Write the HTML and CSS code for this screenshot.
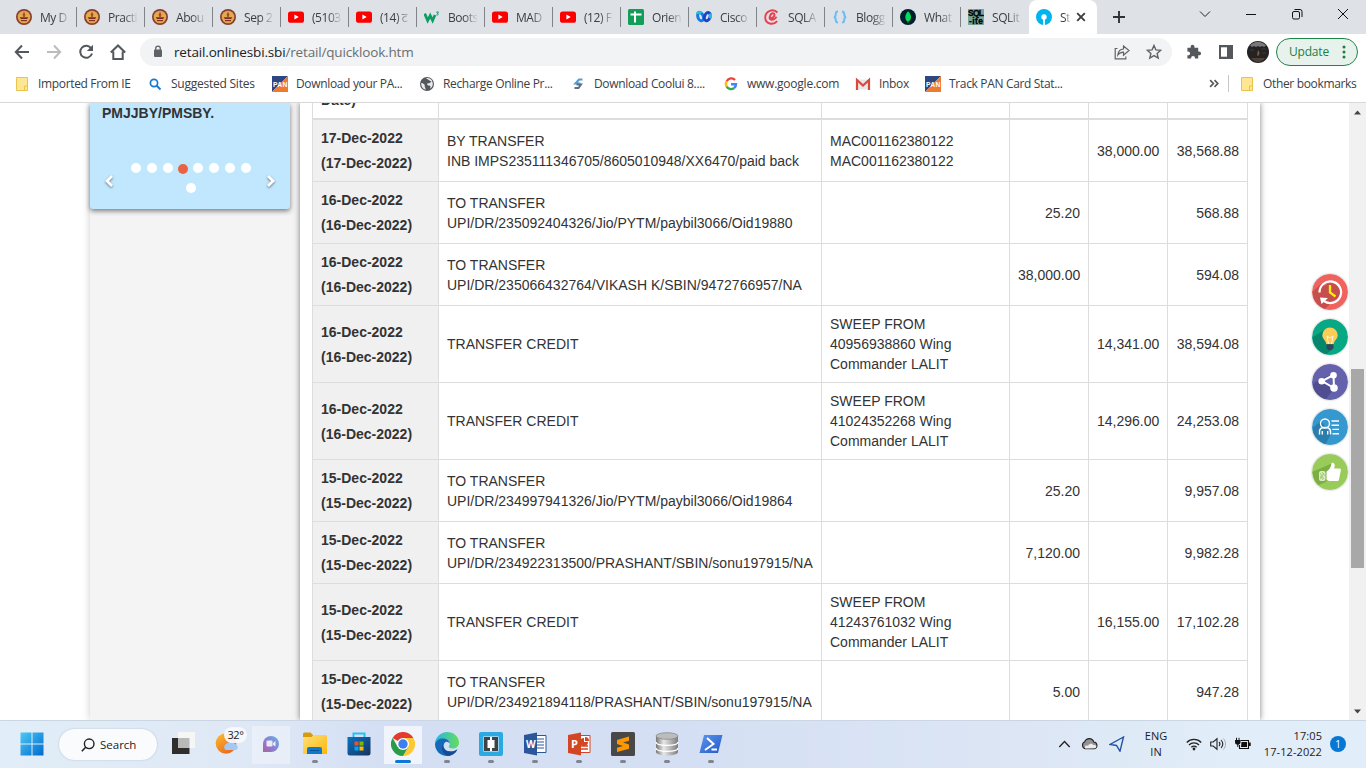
FILE: index.html
```html
<!DOCTYPE html>
<html lang="en">
<head>
<meta charset="utf-8">
<title>Statement</title>
<link rel="stylesheet" href="styles.css">
</head>
<body>
<svg width="0" height="0" class="defs" aria-hidden="true">
  <defs>
    <linearGradient id="gWin" x1="0" y1="0" x2="1" y2="1"><stop offset="0" stop-color="#4cc9f6"/><stop offset="1" stop-color="#0069cf"/></linearGradient>
    <linearGradient id="gSun" x1="0" y1="0" x2="0.6" y2="1"><stop offset="0" stop-color="#fbc02f"/><stop offset="1" stop-color="#ec6a1e"/></linearGradient>
    <linearGradient id="gChat" x1="1" y1="0" x2="0" y2="1"><stop offset="0" stop-color="#63b4ea"/><stop offset=".55" stop-color="#8a80cb"/><stop offset="1" stop-color="#b35ea8"/></linearGradient>
    <linearGradient id="gFold" x1="0" y1="0" x2="1" y2="1"><stop offset="0" stop-color="#ffe07a"/><stop offset="1" stop-color="#fbb80b"/></linearGradient>
    <linearGradient id="gStore" x1="0" y1="0" x2="1" y2="1"><stop offset="0" stop-color="#0a73c4"/><stop offset="1" stop-color="#17325c"/></linearGradient>
    <linearGradient id="gEdge" x1="0" y1="0" x2="1" y2="0"><stop offset="0" stop-color="#2bb4e8"/><stop offset="1" stop-color="#65dd5c"/></linearGradient>
    <linearGradient id="gDb" x1="0" y1="0" x2="1" y2="0"><stop offset="0" stop-color="#777"/><stop offset=".35" stop-color="#e8e8e8"/><stop offset="1" stop-color="#7d7d7d"/></linearGradient>
    <linearGradient id="gPs" x1="0" y1="0" x2="1" y2="1"><stop offset="0" stop-color="#5b97f2"/><stop offset="1" stop-color="#2458c4"/></linearGradient>
    <clipPath id="disc"><circle cx="18" cy="18" r="17.5"/></clipPath>
    <symbol id="emblem" viewBox="0 0 16 16"><circle cx="8" cy="8" r="8" fill="#8b3d31"/><circle cx="8" cy="8" r="6.300" fill="#e0ab4c"/><path d="M8 2.500l1.300 3L8.700 8H7.300L6.700 5.500z" fill="#a8482c"/><path d="M3.800 8.200h8.400c-.4 1.300-1.200 1.900-1.800 1.900H5.600c-.6 0-1.400-.6-1.800-1.900z" fill="#7d2c25"/><path d="M5 11.600h6" stroke="#7d2c25" stroke-width="1.100"/></symbol>
    <symbol id="yt" viewBox="0 0 16 16"><rect y="2.400" width="16" height="11.400" rx="2.600" fill="#f00"/><path d="M6.400 5.600v5l4.300-2.500z" fill="#fff"/></symbol>
    <symbol id="pan" viewBox="0 0 16 16"><path d="M0 0h16L0 16z" fill="#2d4780"/><path d="M16 0v16H0z" fill="#ee7a32"/><text x="1" y="11" font-family="Liberation Sans,sans-serif" font-weight="700" font-size="6.800" textLength="14" fill="#fff">PAN</text></symbol>
    <symbol id="folder" viewBox="0 0 16 16"><path d="M2.500 1.500h11v13h-11z" fill="#ffe692" stroke="#e9c34c"/><path d="M10.500 14v-4h3" fill="none" stroke="#e9c34c"/></symbol>
  </defs>
</svg>
<div class="screen">
  <div class="tabstrip">
    <div class="tab"><svg class="fav"><use href="#emblem"/></svg><span class="tt">My D</span></div>
    <div class="tab"><svg class="fav"><use href="#emblem"/></svg><span class="tt">Practi</span></div>
    <div class="tab"><svg class="fav"><use href="#emblem"/></svg><span class="tt">Abou</span></div>
    <div class="tab"><svg class="fav"><use href="#emblem"/></svg><span class="tt">Sep 2</span></div>
    <div class="tab"><svg class="fav"><use href="#yt"/></svg><span class="tt">(5103</span></div>
    <div class="tab"><svg class="fav"><use href="#yt"/></svg><span class="tt">(14) ट</span></div>
    <div class="tab"><svg class="fav" viewBox="0 0 16 16"><path d="M.7 4.600l3 7 2.500-5 2.400 5L11 6" fill="none" stroke="#0c9d63" stroke-width="2.700"/><path d="M12.300 3h2.200l-1.200 1.400c1.500-.1 1.500 2-.9 1.600" fill="none" stroke="#0c9d63"/></svg><span class="tt">Boots</span></div>
    <div class="tab"><svg class="fav"><use href="#yt"/></svg><span class="tt">MAD</span></div>
    <div class="tab"><svg class="fav"><use href="#yt"/></svg><span class="tt">(12) F</span></div>
    <div class="tab"><svg class="fav" viewBox="0 0 16 16"><rect width="16" height="16" rx="1.500" fill="#129d59"/><path d="M2.500 5.500h11M7 2.500v11" stroke="#fff" stroke-width="2"/></svg><span class="tt">Orien</span></div>
    <div class="tab"><svg class="fav" viewBox="0 0 16 16"><g fill="none" stroke-width="3"><ellipse cx="4.700" cy="7.600" rx="2.700" ry="4.200" stroke="#1878e8" transform="rotate(-20 5 8)"/><ellipse cx="11.200" cy="7.600" rx="2.700" ry="4.200" stroke="#1747c8" transform="rotate(20 11 8)"/><path d="M1.600 5c0-2 2.600-2.400 3.800-.8" stroke="#18c8c8"/><path d="M14 4.600c1 1.600.4 3.600-.2 4.600" stroke="#27b8ed"/></g></svg><span class="tt">Cisco</span></div>
    <div class="tab"><svg class="fav" viewBox="0 0 16 16"><path d="M5 9.400c5 .5 7-4.600 4.200-5.200C6.500 3.800 4.500 9.500 6.500 10.500c2.300 1 5-1.200 6-2.800M13.400 3.500C9.300-1 1.200 1.800 1.200 8.600c0 6.600 8.200 8 12 3.600" fill="none" stroke="#e8404d" stroke-width="1.900"/></svg><span class="tt">SQLA</span></div>
    <div class="tab"><svg class="fav" viewBox="0 0 16 16"><path d="M6 2.500c-2 0-2.200.8-2.200 2.500 0 2-.2 2.600-1.800 3 1.600.4 1.800 1 1.800 3 0 1.700.2 2.500 2.200 2.500M10 2.500c2 0 2.200.8 2.200 2.500 0 2 .2 2.600 1.800 3-1.600.4-1.800 1-1.800 3 0 1.700-.2 2.500-2.200 2.500" fill="none" stroke="#6dbdf5" stroke-width="2"/></svg><span class="tt">Blogg</span></div>
    <div class="tab"><svg class="fav" viewBox="0 0 16 16"><circle cx="8" cy="8" r="8" fill="#021e2b"/><path d="M8 2.300c5 4.700 3 9 .2 10.500V14h-.5v-1.200C4.500 10.500 4.500 6 8 2.300z" fill="#00dc5c"/></svg><span class="tt">What</span></div>
    <div class="tab nosep"><svg class="fav" viewBox="0 0 16 16"><rect width="16" height="16" fill="#78a698"/><g font-family="Liberation Sans,sans-serif" font-weight="700" font-size="8.500" stroke="#000" stroke-width=".3"><text x="0" y="7" textLength="16">SQL</text><text x="1" y="15" textLength="14">-ite</text></g></svg><span class="tt">SQLit</span></div>
    <div class="tab active"><svg class="fav" viewBox="0 0 16 16"><circle cx="8" cy="8" r="8" fill="#00b5ef"/><circle cx="8" cy="8" r="2.700" fill="#fff"/><path d="M7.100 8h1.800v8H7.100z" fill="#fff"/></svg><span class="tt short">St</span><svg class="close" viewBox="0 0 10 10"><path d="M1.200 1.200l7.600 7.600M8.800 1.200L1.200 8.800" stroke="#3c4043" stroke-width="1.900"/></svg></div>
    <svg class="plus" viewBox="0 0 12 12"><path d="M6 0v12M0 6h12" stroke="#303336" stroke-width="1.900"/></svg>
    <div class="winctl">
      <svg viewBox="0 0 12 12"><path d="M1 3.500l5 5 5-5" fill="none" stroke="#222"/></svg>
      <svg viewBox="0 0 12 12"><path d="M1 6.500h10" stroke="#111"/></svg>
      <svg viewBox="0 0 12 12"><rect x="1.500" y="3.500" width="7" height="7.500" rx="1.500" fill="none" stroke="#111"/><path d="M3.500 1.500H9a2 2 0 012 2V9" fill="none" stroke="#111"/></svg>
      <svg viewBox="0 0 12 12"><path d="M1 1l10 10M11 1L1 11" stroke="#111"/></svg>
    </div>
  </div>

  <div class="toolbar">
    <div class="nav">
      <svg viewBox="0 0 16 16"><path d="M15 8H2M8 1.500L1.800 8 8 14.500" fill="none" stroke="#54585c" stroke-width="2"/></svg>
      <svg viewBox="0 0 16 16"><path d="M1 8h13M8 1.500L14.200 8 8 14.500" fill="none" stroke="#babcbe" stroke-width="2"/></svg>
      <svg viewBox="0 0 16 16"><path d="M13.300 4.500A6 6 0 1014 9.500" fill="none" stroke="#54585c" stroke-width="2"/><path d="M15 .8v6.200H8.800z" fill="#54585c"/></svg>
      <svg viewBox="0 0 16 16"><path d="M.8 8.500L8 1.500l7.200 7M3.300 7.500v7.400h9.400V7.500" fill="none" stroke="#54585c" stroke-width="2"/></svg>
    </div>
    <div class="omnibox">
      <svg class="lock" viewBox="0 0 10 13"><rect x="1" y="4.500" width="8" height="7.500" rx="1" fill="#5f6368"/><path d="M2.700 5V3.400a2.300 2.300 0 014.600 0V5" fill="none" stroke="#5f6368" stroke-width="1.300"/></svg>
      <span class="url"><b>retail.onlinesbi.sbi</b>/retail/quicklook.htm</span>
      <svg class="share" viewBox="0 0 16 16"><path d="M3.500 4.500H1.200v10.300h10.600v-2.300M9.500 2v3C6 5.300 4.200 7.500 3.800 11c1.500-2 3-2.800 5.700-2.800v3L15 6.500z" fill="none" stroke="#5f6368" stroke-width="1.200"/></svg>
      <svg class="star" viewBox="0 0 16 16"><path d="M8 1.500l1.900 4.400 4.800.4-3.600 3.100 1.100 4.700L8 11.600l-4.200 2.500 1.100-4.700L1.300 6.300l4.800-.4z" fill="none" stroke="#5f6368" stroke-width="1.400"/></svg>
    </div>
    <div class="actions">
      <svg viewBox="0 0 16 16"><path d="M1.500 4H5C4.600 1.500 6 .8 7 .8s2.400.8 2 3.200h4v4c2.300-.4 3 1 3 2s-.7 2.300-3 2v3.500H9.500c.3-2-.8-2.800-2-2.800s-2.300.8-2 2.800h-4V12c2 .3 2.800-.8 2.800-2S3.500 7.700 1.500 8z" fill="#54585c" transform="scale(.94)"/></svg>
      <svg viewBox="0 0 16 16"><path d="M1 1h14v14H1z" fill="#54585c"/><path d="M3 3.300h6v9.400H3z" fill="#fff"/></svg>
      <svg class="avatar" viewBox="0 0 22 22"><circle cx="11" cy="11" r="11" fill="#252223"/><path d="M3 4.500C8-.5 14-.5 19 4.500l-2 1.500-2-1-2 1-2-1-2 1-2-1-2 1z" fill="#77797d"/><path d="M4 17h14c-4 5.500-10 5.500-14 0z" fill="#4d4038"/><path d="M11 9l1.500 2.500-.5 3h-2z" fill="#7a5b45"/><path d="M3 9h4M14 8h5M15 12h4" stroke="#3f3a39"/></svg>
      <div class="update"><span>Update</span><svg viewBox="0 0 4 14"><circle cx="2" cy="2" r="1.500"/><circle cx="2" cy="7" r="1.500"/><circle cx="2" cy="12" r="1.500"/></svg></div>
    </div>
  </div>

  <div class="bookmarks">
    <div class="bm"><svg><use href="#folder"/></svg><span>Imported From IE</span></div>
    <div class="bm wide"><svg viewBox="0 0 16 16"><circle cx="7" cy="7" r="3.600" fill="none" stroke="#1b78d0" stroke-width="1.700"/><path d="M9.500 9.500l4 4" stroke="#1b78d0" stroke-width="2"/></svg><span>Suggested Sites</span></div>
    <div class="bm"><svg><use href="#pan"/></svg><span>Download your PA...</span></div>
    <div class="bm"><svg viewBox="0 0 16 16"><circle cx="8" cy="8" r="7" fill="#54585c"/><path d="M2.200 7c2 .3 4 1.200 3.500 3-.2 1 1 1.500.8 3.700C3.500 13 2 10 2.200 7zM7 2.300c3-.8 5.500 1 6.500 3.200-2 0-2 2-4 1.700-2-.2-1.500 2.300.5 2.300 1.500 0 2 1 1 3.300 2.500-1.300 3.200-4 2.700-6.300" fill="#e9eaeb"/></svg><span>Recharge Online Pr...</span></div>
    <div class="bm"><svg viewBox="0 0 16 16"><path d="M12.500 3.500H9L5.500 7.500h5" fill="none" stroke="#4f9fda" stroke-width="2.200"/><path d="M6.500 8.500h4.500L8.500 12H4.500" fill="none" stroke="#5c7183" stroke-width="2"/></svg><span>Download Coolui 8....</span></div>
    <div class="bm wide"><svg viewBox="0 0 16 16"><g fill="none" stroke-width="2.400"><path d="M12 4A5 5 0 003.700 5.400" stroke="#ea4335"/><path d="M3.700 5.400a5 5 0 000 5.200" stroke="#fbbc05"/><path d="M3.700 10.600A5 5 0 0011.200 12" stroke="#34a853"/><path d="M11.200 12A5 5 0 0013 8.200H8" stroke="#4285f4"/></g></svg><span>www.google.com</span></div>
    <div class="bm"><svg viewBox="0 0 16 16"><path d="M1.500 3.500h13v10h-13z" fill="#e9e9e9"/><path d="M2 14V4l6 5.500L14 4v10" fill="none" stroke="#d54b3d" stroke-width="2.200"/></svg><span>Inbox</span></div>
    <div class="bm"><svg><use href="#pan"/></svg><span>Track PAN Card Stat...</span></div>
    <div class="bm more"><svg viewBox="0 0 10 10"><path d="M1 2l3 3-3 3M5 2l3 3-3 3" fill="none" stroke="#54585c" stroke-width="1.500"/></svg></div>
    <div class="bm other"><svg><use href="#folder"/></svg><span>Other bookmarks</span></div>
  </div>

  <div class="viewport">
    <div class="page">
      <div class="side">
        <div class="card">
          <p>PMJJBY/PMSBY.</p>
          <div class="slider">
            <svg viewBox="0 0 10 14"><path d="M8 2L3 7l5 5" fill="none" stroke="#fff" stroke-width="2.800"/></svg>
            <div class="dots"><i></i><i></i><i></i><i class="on"></i><i></i><i></i><i></i><i></i><i></i></div>
            <svg viewBox="0 0 10 14"><path d="M2 2l5 5-5 5" fill="none" stroke="#fff" stroke-width="2.800"/></svg>
          </div>
        </div>
      </div>
      <div class="main">
        <div class="row head"><div>Date)</div><div></div><div></div><div></div><div></div><div></div></div>
        <div class="row"><div>17-Dec-2022<br>(17-Dec-2022)</div><div>BY TRANSFER<br>INB IMPS235111346705/8605010948/XX6470/paid back</div><div>MAC001162380122<br>MAC001162380122</div><div></div><div>38,000.00</div><div>38,568.88</div></div>
        <div class="row"><div>16-Dec-2022<br>(16-Dec-2022)</div><div>TO TRANSFER<br>UPI/DR/235092404326/Jio/PYTM/paybil3066/Oid19880</div><div></div><div>25.20</div><div></div><div>568.88</div></div>
        <div class="row"><div>16-Dec-2022<br>(16-Dec-2022)</div><div>TO TRANSFER<br>UPI/DR/235066432764/VIKASH K/SBIN/9472766957/NA</div><div></div><div>38,000.00</div><div></div><div>594.08</div></div>
        <div class="row tall"><div>16-Dec-2022<br>(16-Dec-2022)</div><div>TRANSFER CREDIT</div><div>SWEEP FROM<br>40956938860 Wing<br>Commander LALIT</div><div></div><div>14,341.00</div><div>38,594.08</div></div>
        <div class="row tall"><div>16-Dec-2022<br>(16-Dec-2022)</div><div>TRANSFER CREDIT</div><div>SWEEP FROM<br>41024352268 Wing<br>Commander LALIT</div><div></div><div>14,296.00</div><div>24,253.08</div></div>
        <div class="row"><div>15-Dec-2022<br>(15-Dec-2022)</div><div>TO TRANSFER<br>UPI/DR/234997941326/Jio/PYTM/paybil3066/Oid19864</div><div></div><div>25.20</div><div></div><div>9,957.08</div></div>
        <div class="row"><div>15-Dec-2022<br>(15-Dec-2022)</div><div>TO TRANSFER<br>UPI/DR/234922313500/PRASHANT/SBIN/sonu197915/NA</div><div></div><div>7,120.00</div><div></div><div>9,982.28</div></div>
        <div class="row tall"><div>15-Dec-2022<br>(15-Dec-2022)</div><div>TRANSFER CREDIT</div><div>SWEEP FROM<br>41243761032 Wing<br>Commander LALIT</div><div></div><div>16,155.00</div><div>17,102.28</div></div>
        <div class="row"><div>15-Dec-2022<br>(15-Dec-2022)</div><div>TO TRANSFER<br>UPI/DR/234921894118/PRASHANT/SBIN/sonu197915/NA</div><div></div><div>5.00</div><div></div><div>947.28</div></div>
      </div>
    </div>
    <div class="floaters">
      <svg viewBox="0 0 36 36"><circle cx="18" cy="18" r="18" fill="#ef625e"/><path d="M9 10L0 18v18h12l16-16z" fill="#c64f4e" clip-path="url(#disc)"/><circle cx="19" cy="18" r="9" fill="#c64f4e"/><path d="M7.500 18.500A10.800 10.800 0 1112 27" fill="none" stroke="#fff" stroke-width="2.200"/><path d="M8 23.500l8 .5-6.500 6z" fill="#fff"/><path d="M18 11v7.500l5.500 4" fill="none" stroke="#fff200" stroke-width="2.300"/></svg>
      <svg viewBox="0 0 36 36"><circle cx="18" cy="18" r="18" fill="#07a883"/><path d="M13 10.500L-2 20l14 18 8-8z" fill="#06866c" clip-path="url(#disc)"/><path d="M18 8.500a7.700 7.700 0 00-7.700 7.700c0 4 3.700 5 4 9h7.400c.3-4 4-5 4-9A7.700 7.700 0 0018 8.500z" fill="#ffcd55"/><path d="M16.500 25l-1.500-8 3 2 3-2-1.500 8" fill="none" stroke="#fff" stroke-width=".8"/><path d="M14.500 25.300h7v4l-2.300 2h-2.400l-2.300-2z" fill="#31465b"/></svg>
      <svg viewBox="0 0 36 36"><circle cx="18" cy="18" r="18" fill="#6462ad"/><path d="M8 15L-2 22l14 16 11-15-4-12z" fill="#504e91" clip-path="url(#disc)"/><path d="M10 17l11.500-6 .5 13z" fill="#6462ad" stroke="#fff" stroke-width="2"/><circle cx="9.700" cy="17.300" r="3.300" fill="#fff"/><circle cx="21.500" cy="11.300" r="3.300" fill="#fff"/><circle cx="22" cy="24" r="3.800" fill="#fff"/></svg>
      <svg viewBox="0 0 36 36"><circle cx="18" cy="18" r="18" fill="#3598cf"/><path d="M9 12L-2 21l14 17 7-13z" fill="#2b7eac" clip-path="url(#disc)"/><g fill="none" stroke="#fff" stroke-width="1.400"><circle cx="13" cy="14.500" r="4.500"/><path d="M7.500 25.500v-3c0-2 1.500-3.500 3.500-4h4c2 .5 3.500 2 3.500 4v3M10.300 22v3.500M15.700 22v3.500M19.500 12H27M19.500 16.200H27M20.500 20.400H27M20.500 24.800H27"/></g></svg>
      <svg viewBox="0 0 36 36"><circle cx="18" cy="18" r="18" fill="#98cb59"/><path d="M21 9L0 18l4 14 10-4z" fill="#7baf45" clip-path="url(#disc)"/><rect x="7" y="17" width="6.500" height="10" rx="2" fill="#dfeacb"/><path d="M8 19l4 6M8 22l3 4M10 18l3 4M12 19l-4 6" stroke="#89bd51" stroke-width=".7"/><path d="M14.500 17.500c3-2 4.600-4.500 5-8.500 2.500-.7 4.200 1.500 2.600 5.500h5.500c1.300 0 1.600 1 1.200 2l-1.800 9c-.3 1-1 1.500-2 1.500H17l-2.500-1.500z" fill="#fff"/></svg>
    </div>
    <div class="scroll"><svg viewBox="0 0 9 5"><path d="M0 5l4.500-5L9 5z"/></svg><div class="thumb"></div><svg viewBox="0 0 9 5"><path d="M0 0l4.500 5L9 0z"/></svg></div>
  </div>

  <div class="taskbar">
    <div class="app"><svg viewBox="0 0 24 24"><path d="M.5 .5h11v11H.5zM12.500.5h11v11h-11zM.5 12.500h11v11H.5zM12.500 12.500h11v11h-11z" fill="url(#gWin)"/></svg></div>
    <div class="search"><svg viewBox="0 0 14 14"><circle cx="8.200" cy="5.800" r="4.800" fill="none" stroke="#222" stroke-width="1.400"/><path d="M4.700 9.300L.8 13.200" stroke="#222" stroke-width="1.600"/></svg><span>Search</span></div>
    <div class="app"><svg viewBox="0 0 24 24"><rect x="1" y="6" width="17.500" height="16" fill="#2f2e2d"/><rect x="7" y="0" width="17.500" height="16" rx="1" fill="#f5f6f6"/><path d="M7 6h11.500v10H7z" fill="#b9b9b9"/></svg></div>
    <div class="app weather"><svg viewBox="0 0 24 24"><circle cx="11" cy="11.500" r="10.300" fill="url(#gSun)"/><path d="M11 18a3.500 3.500 0 011-6.500 5 5 0 018 .5 3.200 3.200 0 011 6z" fill="#a4c8f4"/></svg><span>32°</span></div>
    <div class="app lit soft"><svg viewBox="0 0 24 24"><path d="M4 20V12a8 8 0 118 8z" fill="url(#gChat)"/><rect x="7.500" y="8.500" width="6" height="6" rx="1" fill="#eee8fb"/><path d="M14 11l2.500-2v5.500L14 13z" fill="#eee8fb"/></svg></div>
    <div class="app run"><svg viewBox="0 0 24 24"><path d="M0 2a1.500 1.500 0 011.500-1.500h6L10 3v4H0z" fill="#d99a0e"/><path d="M0 5h8.500l2-2H22.500A1.500 1.500 0 0124 4.500V22H0z" fill="url(#gFold)"/><path d="M4 22v-5a2 2 0 012-2h11a2 2 0 012 2v5z" fill="#0f79cf"/><path d="M7 18.500h9" stroke="#0a5598"/></svg></div>
    <div class="app"><svg viewBox="0 0 24 24"><path d="M6.500 6V1.500h11V6" fill="none" stroke="#28c0f2" stroke-width="2"/><path d="M.5 5h23v16a2.500 2.500 0 01-2.500 2.500H3A2.500 2.500 0 01.5 21z" fill="url(#gStore)"/><path d="M7.500 9.500h4v4h-4z" fill="#f25022"/><path d="M12.500 9.500h4v4h-4z" fill="#7fba00"/><path d="M7.500 14.500h4v4h-4z" fill="#00a4ef"/><path d="M12.500 14.500h4v4h-4z" fill="#ffb900"/></svg></div>
    <div class="app lit run front"><svg viewBox="0 0 24 24"><path d="M12 12L1.600 6A12 12 0 0122.400 6z" fill="#e33b2e"/><path d="M12 12V6h10.400A12 12 0 0112 24l5.200-9z" fill="#fcc934"/><path d="M12 12l5.200 3L12 24A12 12 0 011.600 6L6.800 15z" fill="#2a9c48"/><circle cx="12" cy="12" r="6" fill="#fff"/><circle cx="12" cy="12" r="4.700" fill="#3c7ff0"/></svg></div>
    <div class="app run"><svg viewBox="0 0 24 24"><path d="M0 12C0 5 6 0 12 0c7 0 12 5 12 10.500 0 4-3 6-6.500 6-2.500 0-3.700-.9-3.700-1.700 0-.9 1-1.300 1-3C14.800 9 12 7 8.500 7 4 7 1 9.500 0 12z" fill="url(#gEdge)"/><path d="M0 12c1-3.500 4-5.500 8-5.500 4 0 6.800 2.500 6.800 5.300-1-2-3.800-2.800-5.300-.8-2.500 3.500.5 8.500 6 8.500 2.500 0 5-.8 7-2.300C20.500 21.500 16.500 24 12 24 5.500 24 0 19 0 12z" fill="#1668b8"/><path d="M8.500 12c-1.500 4 1.500 7.500 7 7.500 2.500 0 5-.8 7-2.300-2 4-5.500 6.300-9 6.700C7.500 22.500 5.500 16 8.500 12z" fill="#134c95"/></svg></div>
    <div class="app run"><svg viewBox="0 0 24 24"><rect width="24" height="24" rx="2" fill="#2ba9e0"/><rect x="4.500" y="4.500" width="15" height="15" fill="#fff"/><path d="M5 5h6v3H8.500v8H11v3H5zM19 5h-6v3h2.500v8H13v3h6z" fill="#404346"/></svg></div>
    <div class="app run"><svg viewBox="0 0 24 24"><path d="M12 3.500h11v17H12z" fill="#fff" stroke="#2b579a"/><path d="M14 7h7M14 10h7M14 13h7M14 16h7" stroke="#2b579a"/><path d="M1 3L14 .5v23L1 21z" fill="#2b579a"/><text x="3" y="16" font-family="Open Sans,sans-serif" font-size="10" font-weight="700" textLength="9" fill="#fff">W</text></svg></div>
    <div class="app run"><svg viewBox="0 0 24 24"><path d="M12 3.500h11v17H12z" fill="#fff" stroke="#d24625"/><path d="M14 14h7M14 17h7" stroke="#d24625" stroke-width="1.500"/><path d="M17 6v4h4a4 4 0 11-4-4zM18 5a4 4 0 014 4h-4z" fill="#d24625"/><path d="M1 3L14 .5v23L1 21z" fill="#d24625"/><text x="4" y="16" font-family="Open Sans,sans-serif" font-size="11" font-weight="700" fill="#fff">P</text></svg></div>
    <div class="app run"><svg viewBox="0 0 24 24"><rect width="24" height="24" rx="1.500" fill="#484848"/><path d="M18 4.500v4.200l-6 1.800 6 2v4.200L6 20v-4.200l6-1.800-6-2V8z" fill="#ff9800"/></svg></div>
    <div class="app run"><svg viewBox="0 0 24 24"><path d="M1 4v16c0 2 5 3.500 11 3.500S23 22 23 20V4z" fill="url(#gDb)"/><ellipse cx="12" cy="4" rx="11" ry="3.300" fill="#bcbcbc" stroke="#838383" stroke-width=".7"/><path d="M1 10c0 4.500 22 4.500 22 0M1 16c0 4.500 22 4.500 22 0" fill="none" stroke="#fff" stroke-width="1.300"/></svg></div>
    <div class="app run"><svg viewBox="0 0 24 24"><path d="M5 3h18.500L19 21H.5z" fill="url(#gPs)"/><path d="M8 6l6.500 6L6 18M12.500 17.500h5.500" fill="none" stroke="#fff" stroke-width="2"/></svg></div>
    <div class="tray">
      <svg class="t1" viewBox="0 0 12 12"><path d="M.8 9L6 3.500 11.200 9" fill="none" stroke="#222" stroke-width="1.300"/></svg>
      <svg class="t2" viewBox="0 0 16 12"><path d="M4 11a3.500 3.500 0 01-.5-6.600A4.500 4.500 0 0112 4.500 3.300 3.300 0 0112.500 11z" fill="#929292" stroke="#222"/><path d="M4 10.600c-1-1.500 0-3.500 2.500-2.600 2-2.500 4-2 5-.5 4-.8 3.500 3 1.200 3z" fill="#ececec"/></svg>
      <svg class="t3" viewBox="0 0 16 16"><path d="M14.500 1L1 8.500l6.500 1 3.500 5.700z" fill="none" stroke="#2352a5" stroke-width="1.400"/></svg>
      <div class="lang">ENG<br>IN</div>
      <svg class="t4" viewBox="0 0 16 14"><g fill="none" stroke="#222" stroke-width="1.300"><path d="M.8 5.500a10 10 0 0114.400 0M3 8a7 7 0 0110 0M5.300 10.300a4 4 0 015.400 0"/></g><circle cx="8" cy="12" r="1.400" fill="#222"/></svg>
      <svg class="t5" viewBox="0 0 16 14"><path d="M.7 5h2.500L7 1.800v10.400L3.200 9H.7zM9 5c1.200 1.200 1.200 2.800 0 4M11 3c2.300 2.500 2.300 5.500 0 8" fill="none" stroke="#222" stroke-width="1.100"/><path d="M13.300 1.500c3 3.300 3 7.700 0 11" fill="none" stroke="#aaa"/></svg>
      <svg class="t6" viewBox="0 0 16 14"><path d="M5.500 3.500H13.500v8H4.500V8" fill="none" stroke="#111" stroke-width="1.100"/><path d="M6.500 5h5.500v5H6z" fill="#111"/><path d="M14 5.500h1.700v3.500H14zM0 3h5.500v2a2.700 2.700 0 01-5.500 0z" fill="#111"/><path d="M1.500 .8v2.200M4 .8v2.200M2.800 7v3" stroke="#111"/></svg>
      <div class="clock">17:05<br>17-12-2022</div>
      <div class="count">1</div>
    </div>
  </div>
</div>
</body>
</html>
```
FILE: styles.css
```css
* { box-sizing: border-box; }
body { margin: 0; overflow: hidden; font-family: "Open Sans", "Noto Sans", sans-serif; font-size: 12px; color: #3c4043; }
svg { display: block; flex: none; }
.defs { position: absolute; }
.screen { width: 1366px; height: 768px; display: flex; flex-direction: column; overflow: hidden; background: #fff; }

.tabstrip { height: 34px; flex: none; background: #dee1e6; display: flex; align-items: center; padding-left: 9px; }
.tab { width: 68px; height: 34px; flex: none; display: flex; align-items: center; padding-left: 7px; gap: 8px; background: linear-gradient(#808387, #808387) right 0 top 7px / 1px 20px no-repeat; }
.tab.nosep { background: none; }
.fav { width: 16px; height: 16px; }
.tt { width: 29px; white-space: nowrap; letter-spacing: -.45px; -webkit-mask-image: linear-gradient(90deg, #000 55%, rgba(0,0,0,.1)); mask-image: linear-gradient(90deg, #000 55%, rgba(0,0,0,.1)); }
.tab.active { background: #fff; border-radius: 8px 8px 0 0; }
.tt.short { width: 10px; margin-right: -1px; }
.close { width: 10px; height: 10px; margin-left: -1px; }
.plus { width: 12px; height: 12px; margin-left: 16px; }
.winctl { margin-left: auto; display: flex; gap: 34px; padding: 0 17px 6px 0; }
.winctl svg { width: 12px; height: 12px; }

.toolbar { height: 35px; flex: none; display: flex; align-items: center; }
.nav { display: flex; gap: 16px; padding-left: 14px; width: 140px; }
.nav svg { width: 16px; height: 16px; }
.omnibox { width: 1032px; height: 28px; border-radius: 14px; background: #f1f3f4; display: flex; align-items: center; padding: 0 10px 0 13px; }
.lock { width: 10px; height: 13px; }
.url { margin-left: 11px; font-size: 13.5px; color: #6a6e73; letter-spacing: -.16px; flex: 1; white-space: nowrap; }
.url b { font-weight: 400; color: #202124; }
.share, .star { width: 16px; height: 16px; }
.star { margin-left: 16px; }
.actions { display: flex; align-items: center; padding-left: 14px; }
.actions > svg { width: 16px; height: 16px; margin-right: 16px; }
.actions > svg.avatar { width: 22px; height: 22px; margin: 0 7px 0 -3px; }
.update { width: 82px; height: 28px; border: 1px solid #1e8449; border-radius: 14px; background: #e8f2ec; color: #1a7f3c; display: flex; align-items: center; padding: 0 11px 0 12px; justify-content: space-between; font-size: 12px; letter-spacing: -.2px; }
.update svg { width: 4px; height: 14px; fill: #1a7f3c; }

.bookmarks { height: 34px; flex: none; border-bottom: 1px solid #d6d8da; padding-left: 14px; display: grid; grid-template-columns: 133px 125px 147px 151px 153px 132px 70px 284px 30px 1fr; align-items: center; padding-bottom: 4px; letter-spacing: -.34px; }
.bm { display: flex; align-items: center; gap: 8px; white-space: nowrap; }
.bm.wide { letter-spacing: -.24px; }
.bm svg { width: 16px; height: 16px; }
.bm.more svg { width: 11px; height: 11px; }
.bm.other { border-left: 1px solid #c4c7ca; margin-left: -11px; padding-left: 10px; }

.viewport { flex: 1; min-height: 0; overflow: hidden; display: flex; position: relative; }
.page { width: 1349px; display: flex; padding-left: 90px; }
.side { width: 210px; background: #f4f4f4; box-shadow: 0 0 8px rgba(0,0,0,.2); }
.card { width: 200px; height: 106px; background: #c1e7ff; border-radius: 0 0 3px 3px; box-shadow: 0 2px 5px rgba(0,0,0,.5); padding: 0 14px 0 12px; }
.card p { margin: 0; font: 700 14px/20px "Liberation Sans", Arial, sans-serif; color: #333; }
.slider { display: flex; justify-content: space-between; margin: 38px 0 0 2px; }
.slider > svg { width: 10px; height: 14px; margin-top: 13px; filter: drop-shadow(0 1px 1px rgba(0,0,0,.5)); }
.dots { display: flex; flex-wrap: wrap; width: 126px; justify-content: center; column-gap: 6px; row-gap: 10px; align-content: flex-start; padding: 2px 0 0 1px; }
.dots i { width: 10px; height: 10px; border-radius: 50%; background: #fff; }
.dots i.on { background: #e96342; transform: translateY(1px); margin: 0 -1px; }
.main { width: 960px; padding-left: 12px; background: #fff; box-shadow: 0 0 6px rgba(0,0,0,.5); position: relative; font: 14px/20px "Liberation Sans", Arial, sans-serif; color: #333; }
.row { display: grid; grid-template-columns: 126px 383px 188px 79px 79px 81px; width: 936px; height: 62px; border-bottom: 1px solid #ddd; }
.row.tall { height: 77px; }
.row > div { border-left: 1px solid #ddd; padding: 0 8px; display: flow-root; align-content: center; white-space: nowrap; }
.row > div:first-child { background: #f0f0f0; font-weight: 700; line-height: 25px; }
.row.tall > div:first-child { padding-top: 1px; }
.row > div:nth-child(n+4) { text-align: right; }
.row > div:last-child { border-right: 1px solid #ddd; }
.row.head { height: 17px; border-bottom-width: 2px; overflow: hidden; }
.row.head > div:first-child { background: #fff; line-height: 20px; margin-top: -13px; align-content: start; }
.floaters { position: absolute; left: 1312px; top: 171px; display: flex; flex-direction: column; gap: 9px; }
.floaters svg { width: 36px; height: 36px; border-radius: 50%; box-shadow: 0 0 2px rgba(0,0,0,.35); }
.scroll { width: 17px; background: #f1f1f1; display: flex; flex-direction: column; align-items: center; justify-content: space-between; padding: 7px 0 6px; flex: none; }
.scroll svg { width: 7px; height: 5px; fill: #444; }
.thumb { width: 13px; height: 199px; background: #a8a8a8; margin-top: 113px; }

.taskbar { height: 48px; flex: none; border-top: 1px solid #cbd6e4; background: linear-gradient(90deg, #e1edf7 0, #dfe9f6 17%, #d4dff4 28%, #d4dff3 50%, #dce6f5 75%, #e1edf8 90%); display: flex; align-items: center; padding-left: 10px; color: #1c1c1c; }
.app { width: 44px; height: 47px; flex: none; display: flex; align-items: center; justify-content: center; position: relative; padding-bottom: 1px; }
.app > svg { width: 24px; height: 24px; }
.app.lit { background: linear-gradient(rgba(255,255,255,.65), rgba(255,255,255,.65)) center / 38px 38px no-repeat; }
.app.soft { background: linear-gradient(rgba(255,255,255,.35), rgba(255,255,255,.35)) center / 38px 38px no-repeat; }
.app.run::after { content: ""; position: absolute; left: 19px; bottom: 5px; width: 6px; height: 3px; border-radius: 2px; background: #80858f; }
.app.front::after { left: 14px; width: 16px; background: #0a78d4; }
.weather span { position: absolute; left: 19px; top: 6px; width: 23px; height: 16px; border-radius: 8px; background: rgba(247,249,252,.92); font-size: 11px; line-height: 16px; text-align: center; letter-spacing: -.4px; }
.search { width: 98px; height: 31px; margin: 0 4px 0 5px; border-radius: 16px; background: #f9fbfd; box-shadow: 0 0 2px rgba(90,110,140,.35); display: flex; align-items: center; padding-left: 22px; gap: 5px; font-size: 11.5px; }
.search svg { width: 14px; height: 14px; }
.tray { margin-left: auto; display: flex; align-items: center; font-size: 11px; line-height: 16px; padding: 0 20px 2px 0; }
.t1 { width: 13px; height: 12px; margin-right: 10px; }
.t2 { width: 17px; height: 13px; margin-right: 11px; }
.t3 { width: 16px; height: 16px; margin-right: 15px; }
.lang { width: 32px; text-align: center; margin-right: 14px; }
.t4 { width: 16px; height: 14px; margin-right: 8px; }
.t5 { width: 16px; height: 14px; margin-right: 9px; }
.t6 { width: 16px; height: 14px; margin-right: 11px; }
.clock { width: 60px; text-align: right; white-space: nowrap; margin-right: 8px; letter-spacing: .08px; }
.count { width: 16px; height: 16px; border-radius: 50%; background: #0478d4; color: #fff; text-align: center; font-size: 10.5px; }
```
